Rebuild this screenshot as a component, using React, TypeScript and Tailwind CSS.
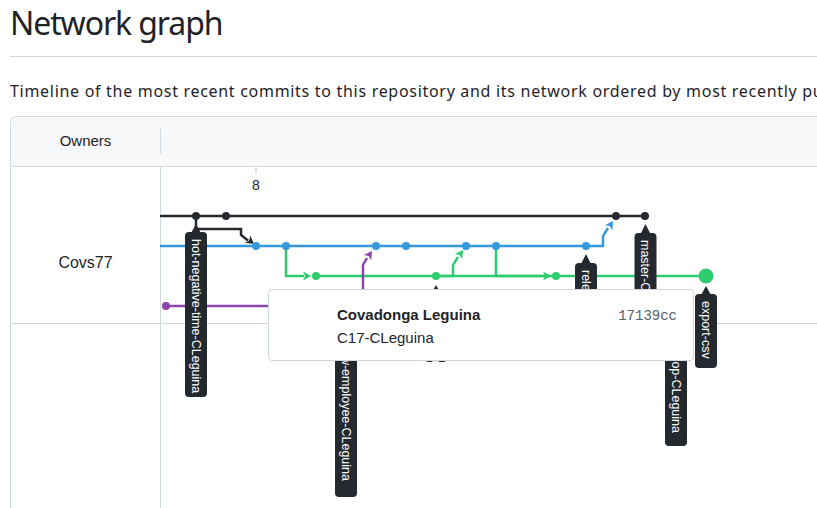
import React from 'react';

type Label = {
  cx: number;
  tip: number;
  top: number;
  bottom: number;
  text: string;
  end?: number;
};

const labels: Label[] = [
  { cx: 196, tip: 224, top: 232, bottom: 397, text: 'hot-negative-time-CLeguina' },
  { cx: 645.5, tip: 224, top: 233, bottom: 355, text: 'master-CLeguina' },
  { cx: 586, tip: 254, top: 263, bottom: 355, text: 'release-CLeguina' },
  { cx: 436, tip: 285, top: 293, bottom: 362, text: 'fix-CLeguina' },
  { cx: 706, tip: 286, top: 294, bottom: 368, text: 'export-csv' },
  { cx: 346, tip: 316, top: 324, bottom: 497, text: 'add-new-employee-CLeguina', end: 481 },
  { cx: 676, tip: 316, top: 324, bottom: 446, text: 'develop-CLeguina', end: 433 },
];

const BLACK = '#24292f';
const BLUE = '#3498db';
const GREEN = '#2ecc71';
const PURPLE = '#8e44ad';

function Arrow({ x, y, angle, color }: { x: number; y: number; angle: number; color: string }) {
  return (
    <polygon
      points="0,0 -8,-4.5 -6,0 -8,4.5"
      fill={color}
      transform={`translate(${x} ${y}) rotate(${angle})`}
    />
  );
}

function BranchLabel({ l }: { l: Label }) {
  const start = l.end ?? l.top + 7;
  return (
    <g>
      <polygon points={`${l.cx - 5},${l.top + 1} ${l.cx},${l.tip} ${l.cx + 5},${l.top + 1}`} fill={BLACK} />
      <rect x={l.cx - 11} y={l.top} width={22} height={l.bottom - l.top} rx={4} fill={BLACK} />
      <text
        transform={`translate(${l.cx} ${start}) rotate(90)`}
        y={4.5}
        fill="#ffffff"
        fontSize={12.5}
        fontFamily="'Liberation Sans', Arial, sans-serif"
        textAnchor={l.end ? 'end' : 'start'}
      >
        {l.text}
      </text>
    </g>
  );
}

function Graph() {
  return (
    <svg
      className="absolute top-0 left-0 pointer-events-none"
      width={1000}
      height={400}
      viewBox="11 167 1000 400"
    >
      {/* timeline tick */}
      <line x1={256} y1={167} x2={256} y2={174} stroke="#cccccc" strokeWidth={1} />
      <text x={256} y={190} textAnchor="middle" fontSize={14} fill="#24292f" fontFamily="'Liberation Sans', Arial, sans-serif">
        8
      </text>

      <g fill="none" strokeWidth={2.5} strokeLinejoin="miter">
        <path d="M160 216 H645" stroke={BLACK} />
        <path d="M196 216 V229 H241 V235 L248 240.5" stroke={BLACK} />
        <path d="M160 246 H586 H603 V236 L608 228" stroke={BLUE} />
        <path d="M286 246 V276 H304" stroke={GREEN} />
        <path d="M316 276 H706" stroke={GREEN} />
        <path d="M436 276 H453 V265 L458 257" stroke={GREEN} />
        <path d="M496 246 V276 H544" stroke={GREEN} />
        <path d="M166 306 H363 V265 L367 258" stroke={PURPLE} />
      </g>

      <Arrow x={254} y={244} angle={37} color={BLACK} />
      <Arrow x={613} y={221} angle={-57} color={BLUE} />
      <Arrow x={311} y={276} angle={0} color={GREEN} />
      <Arrow x={463} y={250} angle={-56} color={GREEN} />
      <Arrow x={551} y={276} angle={0} color={GREEN} />
      <Arrow x={372} y={251} angle={-56} color={PURPLE} />

      {[196, 226, 616, 645].map((x) => (
        <circle key={`k${x}`} cx={x} cy={216} r={4} fill={BLACK} />
      ))}
      {[256, 286, 376, 406, 466, 496, 586].map((x) => (
        <circle key={`b${x}`} cx={x} cy={246} r={4} fill={BLUE} />
      ))}
      {[316, 436, 556].map((x) => (
        <circle key={`g${x}`} cx={x} cy={276} r={4} fill={GREEN} />
      ))}
      <circle cx={706} cy={276} r={7.5} fill={GREEN} />
      <circle cx={166} cy={306} r={4} fill={PURPLE} />

      {labels.map((l) => (
        <BranchLabel key={l.text} l={l} />
      ))}
    </svg>
  );
}

export default function App() {
  return (
    <div className="w-[817px] h-[508px] overflow-hidden bg-white text-[#1f2328]">
      <div className="w-[1100px] pl-[10px]">
        <h1 className="pt-[3px] pb-[13px] border-b border-[#d1d9e0] text-[32px] leading-[40px] tracking-[-1.1px] font-normal font-['Noto_Sans',sans-serif]">
          Network graph
        </h1>
        <p className="mt-[22px] text-[16px] leading-[24px] tracking-[0.7px] whitespace-nowrap font-['Noto_Sans',sans-serif]">
          Timeline of the most recent commits to this repository and its network ordered by most recently pushed to.
        </p>

        <div className="mt-[13px] border border-[#d1d9e0] rounded-md font-['Liberation_Sans',Arial,sans-serif]">
          <div className="flex items-center h-[50px] bg-[#f6f8fa] border-b border-[#d1d9e0] rounded-t-md">
            <div className="w-[149px] text-center text-[15px]">Owners</div>
            <div className="w-px h-[25px] bg-[#d1d9e0]" />
          </div>

          <div className="relative">
            <div className="flex h-[157px] border-b border-[#d1d9e0]">
              <div className="w-[150px] border-r border-[#d1d9e0] pt-[87px] text-center text-[16px] leading-[18px]">
                Covs77
              </div>
              <div className="flex-1" />
            </div>
            <div className="flex h-[260px]">
              <div className="w-[150px] border-r border-[#d1d9e0]" />
              <div className="flex-1" />
            </div>

            <Graph />

            <div className="absolute left-[257px] top-[122px] w-[426px] h-[72px] bg-white border border-[#d0d7de] rounded-[4px] pl-[68px] pr-[16px] pt-[14px]">
              <div className="flex items-baseline justify-between leading-[21px]">
                <span className="text-[15px] font-bold">Covadonga Leguina</span>
                <span className="text-[14px] text-[#57606a] font-['Liberation_Mono',monospace]">17139cc</span>
              </div>
              <div className="text-[15px] leading-[21px]">C17-CLeguina</div>
            </div>
          </div>
        </div>
      </div>
    </div>
  );
}
